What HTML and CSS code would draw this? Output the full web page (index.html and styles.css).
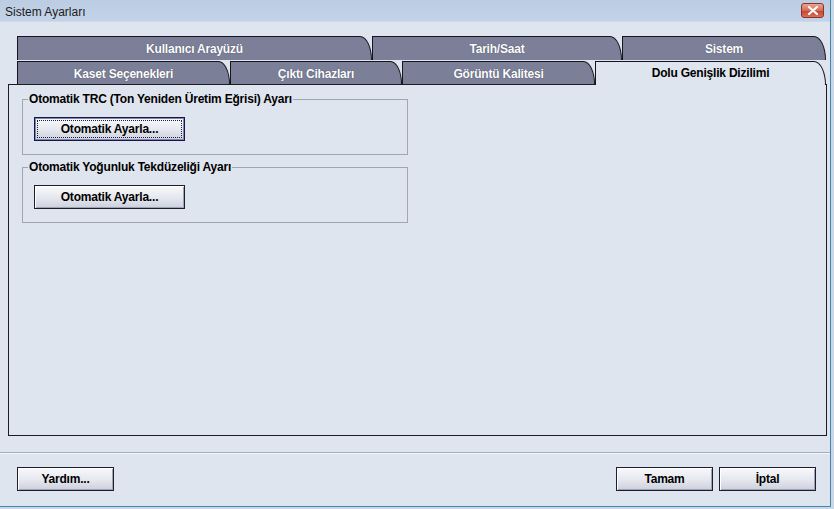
FILE: index.html
```html
<!DOCTYPE html>
<html lang="tr">
<head>
<meta charset="utf-8">
<title>Sistem Ayarları</title>
<link rel="stylesheet" href="styles.css">
</head>
<body>
<div class="window">
  <div class="titlebar">
    <span class="title">Sistem Ayarları</span>
    <span class="close" aria-label="Kapat">
      <svg width="12" height="9" viewBox="0 0 12 9"><path d="M2 1 L10 8 M10 1 L2 8" stroke="#fff" stroke-width="2.2" stroke-linecap="round"/></svg>
    </span>
  </div>
  <div class="content">
    <div class="tabrow row1">
      <div class="tab w355">Kullanıcı Arayüzü</div>
      <div class="tab w250">Tarih/Saat</div>
      <div class="tab w204">Sistem</div>
    </div>
    <div class="tabrow row2">
      <div class="tab w213">Kaset Seçenekleri</div>
      <div class="tab w172">Çıktı Cihazları</div>
      <div class="tab w193">Görüntü Kalitesi</div>
      <div class="tab w231 selected">Dolu Genişlik Dizilimi</div>
    </div>
    <div class="panel">
      <div class="group">
        <div class="group-title">Otomatik TRC (Ton Yeniden Üretim Eğrisi) Ayarı</div>
        <div class="group-body">
          <button class="btn btn-wide focused"><span class="focus-ring">Otomatik Ayarla...</span></button>
        </div>
      </div>
      <div class="group">
        <div class="group-title">Otomatik Yoğunluk Tekdüzeliği Ayarı</div>
        <div class="group-body">
          <button class="btn btn-wide"><span class="focus-ring plain">Otomatik Ayarla...</span></button>
        </div>
      </div>
    </div>
  </div>
  <div class="footer">
    <button class="btn btn-small">Yardım...</button>
    <div class="footer-right">
      <button class="btn btn-small">Tamam</button>
      <button class="btn btn-small">İptal</button>
    </div>
  </div>
</div>
</body>
</html>
```

FILE: styles.css
```css
html, body {
  margin: 0;
  padding: 0;
}
body {
  width: 834px;
  height: 509px;
  overflow: hidden;
  background: #c9d7e7;
  font-family: "Liberation Sans", Arial, sans-serif;
}
.window {
  box-sizing: border-box;
  width: 831px;
  height: 507px;
  background: #dfe5ee;
  border-right: 1px solid #3f88aa;
  border-bottom: 1px solid #3f88aa;
  display: flex;
  flex-direction: column;
}
.titlebar {
  height: 22px;
  flex: none;
  display: flex;
  align-items: center;
  justify-content: space-between;
  padding: 0 6px 0 5px;
  background: linear-gradient(#bccde3, #c3d3e8);
  box-shadow: inset 0 -1px 0 #cdd9e8;
}
.title {
  font-size: 12px;
  color: #1c1c1c;
  padding-top: 1px;
}
.close {
  box-sizing: border-box;
  width: 23px;
  height: 15px;
  margin-top: -2px;
  border: 1px solid #8a3424;
  border-radius: 3px;
  background: linear-gradient(#eaa596, #d76a55 50%, #c2442c 51%, #d9705a);
  display: flex;
  align-items: center;
  justify-content: center;
}
.close svg { display: block; }

.content {
  padding: 14px 3px 0 8px;
  flex: none;
}
.tabrow {
  display: flex;
  margin-left: 9px;
}
.row1 { height: 24px; margin-bottom: 1px; }
.row2 { height: 23px; }
.tab {
  box-sizing: border-box;
  background: #7c7f98;
  border-top: 1px solid #15151f;
  border-left: 1px solid #15151f;
  border-right: 1px solid #15151f;
  border-top-right-radius: 12px 24px;
  color: #fff;
  font-size: 12px;
  font-weight: bold;
  letter-spacing: -0.2px;
  display: flex;
  align-items: center;
  justify-content: center;
  padding-top: 1px;
  text-shadow: 0 0 1px #3a3c50;
}
.w355 { width: 355px; }
.w250 { width: 250px; }
.w204 { width: 204px; }
.w213 { width: 213px; }
.w172 { width: 172px; }
.w193 { width: 193px; }
.w231 { width: 231px; }
.tab.selected {
  background: #dfe5ee;
  color: #000;
  text-shadow: none;
  margin-bottom: -1px;
  position: relative;
  z-index: 1;
  align-items: flex-start;
  padding-top: 4px;
}

.panel {
  box-sizing: border-box;
  width: 819px;
  height: 352px;
  border: 1px solid #1c1c24;
  background: #dfe5ee;
  padding: 14px 0 0 13px;
}
.group {
  width: 386px;
  box-sizing: border-box;
  border: 1px solid #a2a6ae;
  margin-bottom: 12px;
}
.group-title {
  width: fit-content;
  margin: -8px 0 0 5px;
  padding: 0 1px;
  background: #dfe5ee;
  font-size: 12px;
  line-height: 14px;
  font-weight: bold;
  letter-spacing: -0.2px;
  color: #000;
}
.group-body {
  padding: 11px 0 13px 11px;
}

.btn {
  box-sizing: border-box;
  height: 24px;
  border: 1px solid #1d1d2e;
  background: linear-gradient(#f8f9fc, #e4e7ee 55%, #ccd0dc);
  box-shadow: inset 1px 1px 0 #ffffff, inset -1px -1px 0 #9ea4b6;
  font-family: "Liberation Sans", Arial, sans-serif;
  font-size: 12px;
  font-weight: bold;
  letter-spacing: -0.2px;
  color: #000;
  padding: 0;
  margin: 0;
  display: flex;
  align-items: center;
  justify-content: center;
}
.btn-wide { width: 151px; }
.btn-small { width: 97px; }
.btn.focused {
  border-color: #161640;
  box-shadow: inset 0 0 0 1px #7e87bd;
}
.focus-ring {
  box-sizing: border-box;
  width: 145px;
  height: 18px;
  display: flex;
  align-items: center;
  justify-content: center;
  border: 1px dotted #222;
}
.focus-ring.plain { border-color: transparent; }

.footer {
  flex: 1;
  margin-top: 16px;
  border-top: 1px solid #a5adb8;
  box-shadow: inset 0 1px 0 #f3f6fa;
  padding: 14px 14px 0 17px;
  display: flex;
  justify-content: space-between;
  align-items: flex-start;
}
.footer-right {
  display: flex;
  gap: 6px;
}
```
